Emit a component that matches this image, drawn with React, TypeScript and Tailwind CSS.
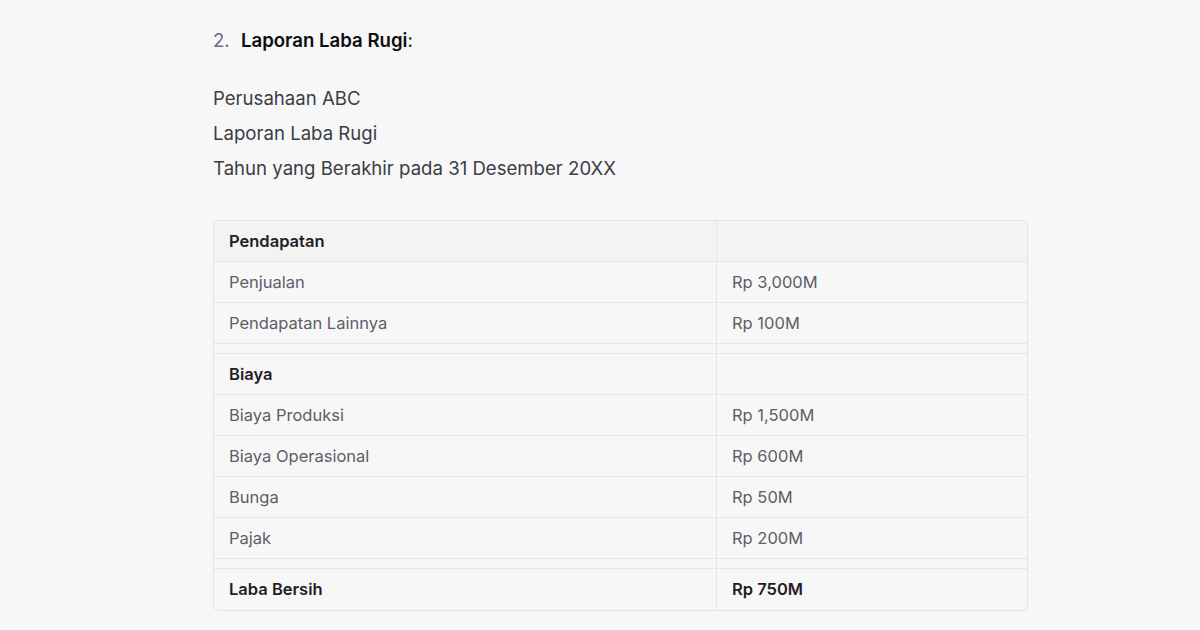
const rows: { label: string; value: string; kind: "head" | "row" | "gap" | "total" }[] = [
  { label: "Pendapatan", value: "", kind: "head" },
  { label: "Penjualan", value: "Rp 3,000M", kind: "row" },
  { label: "Pendapatan Lainnya", value: "Rp 100M", kind: "row" },
  { label: "", value: "", kind: "gap" },
  { label: "Biaya", value: "", kind: "head" },
  { label: "Biaya Produksi", value: "Rp 1,500M", kind: "row" },
  { label: "Biaya Operasional", value: "Rp 600M", kind: "row" },
  { label: "Bunga", value: "Rp 50M", kind: "row" },
  { label: "Pajak", value: "Rp 200M", kind: "row" },
  { label: "", value: "", kind: "gap" },
  { label: "Laba Bersih", value: "Rp 750M", kind: "total" }
];

export default function App() {
  return (
    <div className="h-[630px] w-[1200px] overflow-hidden bg-[#f7f7f8] font-['Inter',sans-serif]">
      <div className="ml-[213px] flex w-[815px] flex-col pt-[26px]">
        <div className="flex h-[28px] items-center text-[18.6px] leading-[28px] text-[#202123]">
          <span className="w-[28px] text-[#6b6c7b]">2.</span>
          <span className="font-semibold text-[#0d0d0d]">Laporan Laba Rugi</span>
          <span>:</span>
        </div>

        <div className="mt-[27px] flex flex-col text-[18.6px] leading-[35px] text-[#3b3d45]">
          <span>Perusahaan ABC</span>
          <span>Laporan Laba Rugi</span>
          <span>Tahun yang Berakhir pada 31 Desember 20XX</span>
        </div>

        <div className="mt-[34px] overflow-hidden rounded-[6px] border border-[#e3e3e5] text-[16.5px]">
          {rows.map((row, i) => {
            const last = i === rows.length - 1;
            const border = last ? "" : "border-b border-[#e6e6e8]";
            if (row.kind === "gap") {
              return (
                <div key={i} className={`grid h-[10px] grid-cols-[503px_1fr] ${border}`}>
                  <div className="border-r border-[#e6e6e8]" />
                  <div />
                </div>
              );
            }
            const bold = row.kind !== "row";
            return (
              <div
                key={i}
                className={`grid h-[41px] grid-cols-[503px_1fr] ${border} ${i === 0 ? "bg-[#f3f3f4]" : ""}`}
              >
                <div
                  className={`flex items-center border-r border-[#e6e6e8] px-[15px] ${
                    bold ? "font-semibold text-[#1f2023]" : "text-[#5d5e66]"
                  }`}
                >
                  {row.label}
                </div>
                <div
                  className={`flex items-center px-[15px] ${
                    bold ? "font-semibold text-[#1f2023]" : "text-[#5d5e66]"
                  }`}
                >
                  {row.value}
                </div>
              </div>
            );
          })}
        </div>
      </div>
    </div>
  );
}
